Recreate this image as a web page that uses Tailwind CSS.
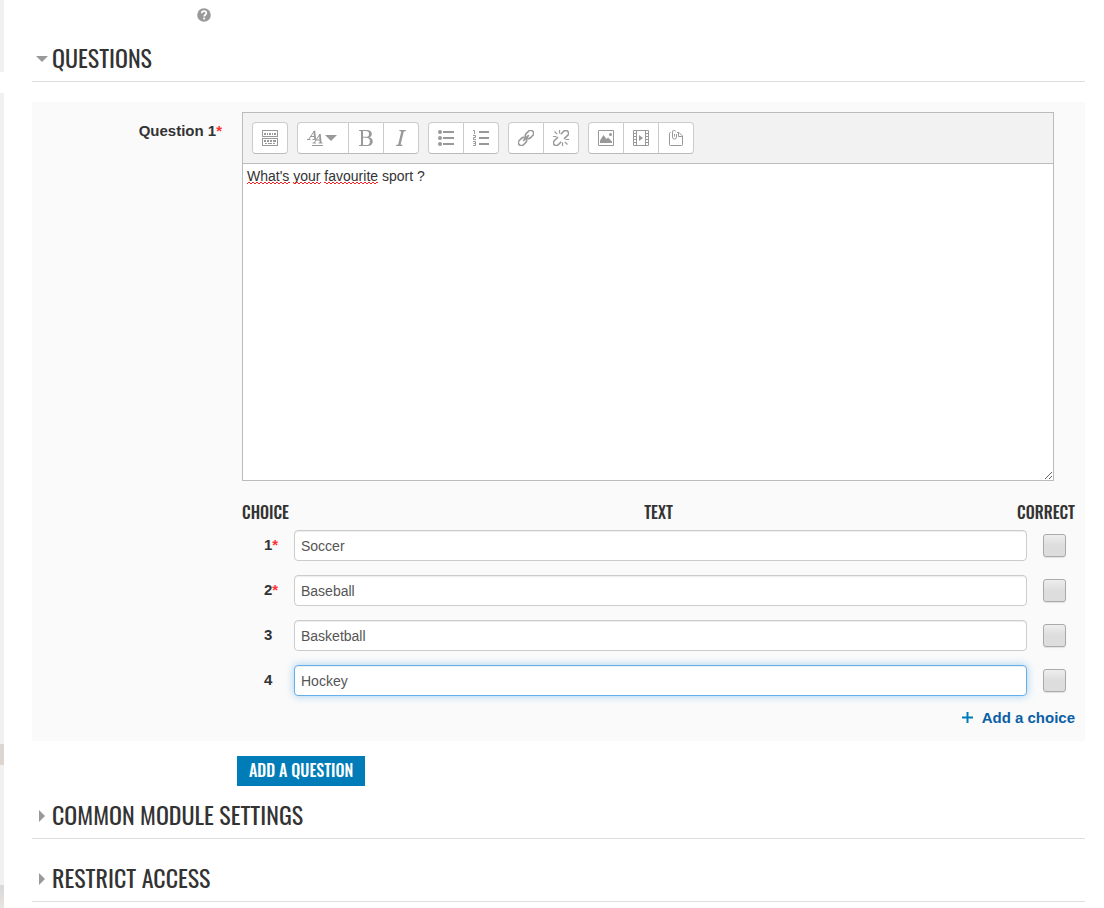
<!DOCTYPE html>
<html lang="en">
<head>
<meta charset="utf-8">
<meta name="viewport" content="width=device-width, initial-scale=1">
<title>Questions</title>
<script src="https://cdn.jsdelivr.net/npm/@tailwindcss/browser@4"></script>
</head>
<body class="bg-white font-['Liberation_Sans',Arial,sans-serif] text-[#333]">
<div class="flex min-h-screen">
  <!-- Page background showing beside the content sheet -->
  <div class="flex w-1 shrink-0 flex-col bg-[#f1f1f1]" aria-hidden="true">
    <div class="h-[72px]"></div>
    <div class="h-[21px] bg-white"></div>
    <div class="h-[651px]"></div>
    <div class="h-[21px] bg-[#ddd6d0]"></div>
    <div class="h-[120px]"></div>
    <div class="flex-1 bg-linear-to-b from-[#d8d8d7] to-[#e9e4e1]"></div>
  </div>

  <main class="min-w-0 flex-1 pr-[19px] pl-7">
    <div class="flex h-9 pt-2 pl-[165px]">
      <button type="button" aria-label="Help" class="h-[14px] w-[14px]">
        <svg width="14" height="14" viewBox="0 0 14 14"><circle cx="7" cy="7" r="6.8" fill="#999"/><path d="M4.7 5.3C4.8 3.8 5.700 3.100 7 3.100s2.300.8 2.300 2c0 1.700-2.100 1.700-2.100 3.400" fill="none" stroke="#fff" stroke-width="1.800"/><path d="M6.200 9.600h1.900v1.800H6.200z" fill="#fff"/></svg>
      </button>
    </div>

    <section>
      <h2 class="border-b border-[#ddd]">
        <button type="button" aria-expanded="true" class="flex h-[45px] w-full items-center gap-1 pl-1 text-left font-[Oswald,'Roboto_Condensed',sans-serif] text-2xl">
          <svg width="12" height="6" viewBox="0 0 12 6"><path d="M0 0h12L6 6z" fill="#999"/></svg>
          <span class="pb-1">QUESTIONS</span>
        </button>
      </h2>

      <div class="mt-5 flex bg-[#fafafa] pt-[10px] pr-[10px] pb-3">
        <label for="q1" class="w-[210px] shrink-0 pt-[9px] pr-5 text-right text-[15px] leading-5 font-bold">Question 1<span class="text-[#f33]">*</span></label>
        <div class="min-w-0 flex-1">
          <div class="mr-[21px] border border-[#bbb] bg-white">
            <div role="toolbar" aria-label="Formatting" class="flex h-[51px] gap-[9px] border-b border-[#bbb] bg-[#f2f2f2] px-[9px] pt-[9px] text-[#999]">
              <div class="flex h-8 divide-x divide-[#ccc] rounded border border-[#ccc] border-b-[#bbb] bg-white">
                <button type="button" aria-label="Show more buttons" class="grid w-[34px] place-items-center">
                  <svg width="16" height="16" viewBox="0 0 16 16" shape-rendering="crispEdges"><path d="M.5.5h15v6H.5zM.5 8.500h15v7H.5z" fill="none" stroke="currentColor"/><path d="M2 3h2v2H2zM5 3h1v2H5zM7 3h2v2H7zM10 3h1v2h-1zM12 3h2v2h-2zM2 10h2v2H2zM5 10h2v2H5zM8 10h2v2H8zM11 10h3v2h-3zM3 13h2v1H3zM6 13h4v1H6zM11 13h2v1h-2z" fill="currentColor"/></svg>
                </button>
              </div>
              <div class="flex h-8 divide-x divide-[#ccc] rounded border border-[#ccc] border-b-[#bbb] bg-white">
                <button type="button" aria-label="Paragraph styles" class="flex w-[51px] items-center pl-[9px]">
                  <svg width="31" height="16" viewBox="0 0 31 16" fill="none" stroke="currentColor"><path d="M1.500 9.500 7.500 .8M3.400 6.500h4M0 9.500h3.500M5.500 9.500h3"/><path d="M7.300 .8 8.200 9.500" stroke-width="1.800"/><path d="M7 13 13 4M9 10h4.200M5.500 13h3.500M11.500 13h4"/><path d="M12.800 4 13.700 13" stroke-width="1.800"/><path d="M5 15.500h11"/><path d="M18 5h12l-6 6z" fill="currentColor" stroke="none"/></svg>
                </button>
                <button type="button" aria-label="Bold" class="grid w-[35px] place-items-center">
                  <svg width="14" height="16" viewBox="0 0 14 16"><path fill="currentColor" fill-rule="evenodd" d="M0 0h7.500C11 0 12.800 1.400 12.800 3.900c0 1.800-1 2.900-2.800 3.400 2.400.5 3.700 1.900 3.700 4.100 0 3-2.100 4.600-5.900 4.600H0v-.8l2-.5V1.300L0 .8zM4 1v5.800h2.700c2.200 0 3.400-1 3.400-2.900C10.100 2 9 1 6.900 1zM4 7.800V15h3.200c2.500 0 3.700-1.200 3.700-3.600s-1.300-3.600-3.800-3.600z"/></svg>
                </button>
                <button type="button" aria-label="Italic" class="grid w-[34px] place-items-center">
                  <svg width="10" height="16" viewBox="0 0 10 16"><path fill="currentColor" d="M3.500 0H10l-.2 1-2 .4L4.600 14.600l1.900.4-.2 1H0l.2-1 2-.4L5.300 1.400 3.300 1z"/></svg>
                </button>
              </div>
              <div class="flex h-8 divide-x divide-[#ccc] rounded border border-[#ccc] border-b-[#bbb] bg-white">
                <button type="button" aria-label="Unordered list" class="grid w-[35px] place-items-center">
                  <svg width="16" height="16" viewBox="0 0 16 16" fill="currentColor"><circle cx="2" cy="2" r="2"/><circle cx="2" cy="8" r="2"/><circle cx="2" cy="14" r="2"/><path d="M5 1h11v2H5zM5 7h11v2H5zM5 13h11v2H5z"/></svg>
                </button>
                <button type="button" aria-label="Ordered list" class="grid w-[34px] place-items-center">
                  <svg width="16" height="16" viewBox="0 0 16 16"><path d="M6 1h10v2H6zM6 7h10v2H6zM6 13h10v2H6z" fill="currentColor"/><path d="M0 .5h1.500V4M0 5.500h2.500v2h-2v2H3M0 11.500h2.500v4H0M.5 13.500h2" fill="none" stroke="currentColor"/></svg>
                </button>
              </div>
              <div class="flex h-8 divide-x divide-[#ccc] rounded border border-[#ccc] border-b-[#bbb] bg-white">
                <button type="button" aria-label="Link" class="grid w-[35px] place-items-center">
                  <svg width="16" height="16" viewBox="0 0 16 16" fill="none" stroke="currentColor" stroke-width="1.600"><g transform="rotate(-45 8 8)"><rect x="-1.500" y="5" width="9" height="6" rx="3"/><rect x="8.500" y="5" width="9" height="6" rx="3"/><path d="M4 8h8"/></g></svg>
                </button>
                <button type="button" aria-label="Unlink" class="grid w-[34px] place-items-center">
                  <svg width="16" height="16" viewBox="0 0 16 16" fill="none" stroke="currentColor" stroke-width="1.600"><g transform="rotate(-45 8 8)"><path d="M6.500 5.200H1.300a2.800 2.800 0 0 0 0 5.600h4.200M9.500 10.800h5.200a2.800 2.800 0 0 0 0-5.600h-4.200"/></g><path d="M1.500 1.500l2.700 2.700M6.500 0v3.500M0 6.500h3.500M14.500 14.500l-2.700-2.700M9.500 16v-3.500M16 9.500h-3.500" stroke-width="1.200"/></svg>
                </button>
              </div>
              <div class="flex h-8 divide-x divide-[#ccc] rounded border border-[#ccc] border-b-[#bbb] bg-white">
                <button type="button" aria-label="Image" class="grid w-[35px] place-items-center">
                  <svg width="16" height="16" viewBox="0 0 16 16"><path d="M.5.5h15v15H.5z" fill="none" stroke="currentColor"/><path d="M2 13v-2.500L5.500 5l3 4 1.500-1.500 4 4V13z" fill="currentColor"/><circle cx="12.500" cy="4.500" r="1.500" fill="currentColor"/></svg>
                </button>
                <button type="button" aria-label="Media" class="grid w-[35px] place-items-center">
                  <svg width="16" height="16" viewBox="0 0 16 16"><path d="M.5.5h15v15H.5zM3.500.5v15M12.500.5v15M0 3.500h3.500M0 6.500h3.500M0 9.500h3.500M0 12.500h3.500M12.500 3.500H16M12.500 6.500H16M12.500 9.500H16M12.500 12.500H16" fill="none" stroke="currentColor"/><path d="M6 5l4 3-4 3z" fill="currentColor"/></svg>
                </button>
                <button type="button" aria-label="Manage files" class="grid w-[34px] place-items-center">
                  <svg width="16" height="16" viewBox="0 0 16 16" fill="none" stroke="currentColor"><path d="M3 2.500h-.500a1 1 0 0 0-1 1v11a1 1 0 0 0 1 1h11a1 1 0 0 0 1-1V6L11 2.500H9M10.500 2.500V6.500h4"/><path d="M6.500 4v2.500M8.500 4v3a2 2 0 0 1-4 0V2a1.500 1.500 0 0 1 3-.5"/></svg>
                </button>
              </div>
            </div>
            <div class="relative">
              <textarea id="q1" spellcheck="false" class="block h-[316px] w-full resize-y px-1 pt-[2px] text-sm outline-none">What's your favourite sport ?</textarea>
              <!-- Spelling marks under the misspelt words -->
              <svg class="pointer-events-none absolute top-[17px] left-1" width="140" height="4" aria-hidden="true"><defs><pattern id="wave" width="4" height="4" patternUnits="userSpaceOnUse"><path d="M0 3 2 1 4 3" fill="none" stroke="#e22" stroke-width="1"/></pattern></defs><path d="M0 0h43v4H0zM46 0h28v4H46zM77 0h54v4H77z" fill="url(#wave)"/></svg>
            </div>
          </div>

          <table class="mt-[17px] w-full table-fixed">
            <colgroup><col class="w-[52px]"><col><col class="w-12"></colgroup>
            <thead class="font-[Oswald,'Roboto_Condensed',sans-serif] text-base leading-7">
              <tr>
                <th scope="col" class="p-0 text-left font-medium">CHOICE</th>
                <th scope="col" class="p-0 pr-1 font-medium">TEXT</th>
                <th scope="col" class="p-0 font-medium"><div class="flex justify-end">CORRECT</div></th>
              </tr>
            </thead>
            <tbody class="text-sm">
              <tr class="h-[45px] align-top">
                <th scope="row" class="pt-[9px] pl-[22px] text-left text-[15px] leading-5"><label for="c1">1<span class="text-[#f33]">*</span></label></th>
                <td class="pt-1"><input id="c1" type="text" value="Soccer" class="block h-[31px] w-full rounded border border-[#ccc] bg-white px-[6px] text-[#555] shadow-[inset_0_1px_1px_rgba(0,0,0,0.075)] outline-none"></td>
                <td class="pt-2 pr-[9px]"><input type="checkbox" aria-label="Choice 1 is correct" class="ml-auto block h-[23px] w-[23px] appearance-none rounded-[3px] border border-[#aaa] bg-linear-to-b from-[#eee] to-[#ddd] to-50% shadow-[0_1px_1px_rgba(0,0,0,0.1)]"></td>
              </tr>
              <tr class="h-[45px] align-top">
                <th scope="row" class="pt-[9px] pl-[22px] text-left text-[15px] leading-5"><label for="c2">2<span class="text-[#f33]">*</span></label></th>
                <td class="pt-1"><input id="c2" type="text" value="Baseball" class="block h-[31px] w-full rounded border border-[#ccc] bg-white px-[6px] text-[#555] shadow-[inset_0_1px_1px_rgba(0,0,0,0.075)] outline-none"></td>
                <td class="pt-2 pr-[9px]"><input type="checkbox" aria-label="Choice 2 is correct" class="ml-auto block h-[23px] w-[23px] appearance-none rounded-[3px] border border-[#aaa] bg-linear-to-b from-[#eee] to-[#ddd] to-50% shadow-[0_1px_1px_rgba(0,0,0,0.1)]"></td>
              </tr>
              <tr class="h-[45px] align-top">
                <th scope="row" class="pt-[9px] pl-[22px] text-left text-[15px] leading-5"><label for="c3">3</label></th>
                <td class="pt-1"><input id="c3" type="text" value="Basketball" class="block h-[31px] w-full rounded border border-[#ccc] bg-white px-[6px] text-[#555] shadow-[inset_0_1px_1px_rgba(0,0,0,0.075)] outline-none"></td>
                <td class="pt-2 pr-[9px]"><input type="checkbox" aria-label="Choice 3 is correct" class="ml-auto block h-[23px] w-[23px] appearance-none rounded-[3px] border border-[#aaa] bg-linear-to-b from-[#eee] to-[#ddd] to-50% shadow-[0_1px_1px_rgba(0,0,0,0.1)]"></td>
              </tr>
              <tr class="h-[45px] align-top">
                <th scope="row" class="pt-[9px] pl-[22px] text-left text-[15px] leading-5"><label for="c4">4</label></th>
                <td class="pt-1"><input id="c4" type="text" value="Hockey" class="block h-[31px] w-full rounded border border-[#66afe9] bg-white px-[6px] text-[#555] shadow-[inset_0_1px_1px_rgba(0,0,0,0.075),0_0_8px_rgba(102,175,233,0.6)] outline-none"></td>
                <td class="pt-2 pr-[9px]"><input type="checkbox" aria-label="Choice 4 is correct" class="ml-auto block h-[23px] w-[23px] appearance-none rounded-[3px] border border-[#aaa] bg-linear-to-b from-[#eee] to-[#ddd] to-50% shadow-[0_1px_1px_rgba(0,0,0,0.1)]"></td>
              </tr>
            </tbody>
          </table>
          <div class="flex justify-end">
            <a href="#" class="flex items-center gap-[9px] text-[15px] leading-[23px] font-bold text-[#0a5fa5]">
              <svg width="11" height="11" viewBox="0 0 11 11"><path d="M5.500 0v11M0 5.500h11" stroke="#007db8" stroke-width="2"/></svg>
              Add a choice
            </a>
          </div>
        </div>
      </div>
      <button type="button" class="mt-[15px] ml-[205px] block h-[30px] bg-[#007db8] px-3 pb-[2px] font-[Oswald,'Roboto_Condensed',sans-serif] text-base font-medium text-white">ADD A QUESTION</button>
    </section>

    <h2 class="mt-2 border-b border-[#ddd]">
      <button type="button" aria-expanded="false" class="flex h-11 w-full items-center gap-[7px] pl-[7px] text-left font-[Oswald,'Roboto_Condensed',sans-serif] text-2xl">
        <svg width="6" height="12" viewBox="0 0 6 12"><path d="M0 0v12l6-6z" fill="#999"/></svg>
        <span class="pb-1">COMMON MODULE SETTINGS</span>
      </button>
    </h2>
    <h2 class="mt-[18px] border-b border-[#ddd]">
      <button type="button" aria-expanded="false" class="flex h-11 w-full items-center gap-[7px] pl-[7px] text-left font-[Oswald,'Roboto_Condensed',sans-serif] text-2xl">
        <svg width="6" height="12" viewBox="0 0 6 12"><path d="M0 0v12l6-6z" fill="#999"/></svg>
        <span class="pb-1">RESTRICT ACCESS</span>
      </button>
    </h2>
  </main>
</div>
</body>
</html>
